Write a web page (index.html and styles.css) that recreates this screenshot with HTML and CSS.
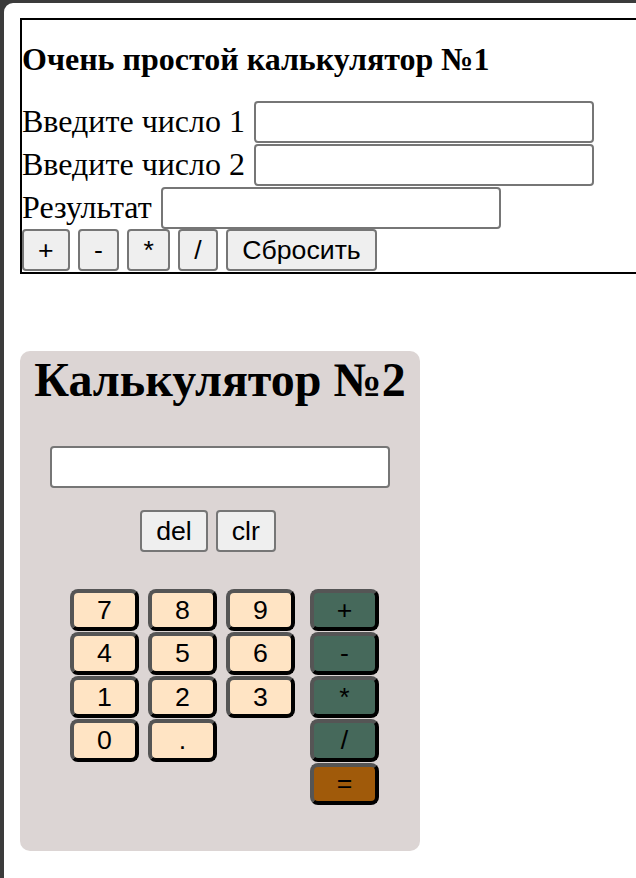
FILE: index.html
```html
<!DOCTYPE html>
<html lang="ru">
<head>
<meta charset="utf-8">
<title>Калькуляторы</title>
<link rel="stylesheet" href="styles.css">
</head>
<body>
<div class="window">
  <section class="calc1">
    <h4 class="calc1-title">Очень простой калькулятор №1</h4>
    <div class="row"><label class="label">Введите число 1</label><input class="field" type="text"></div>
    <div class="row"><label class="label">Введите число 2</label><input class="field" type="text"></div>
    <div class="row"><label class="label">Результат</label><input class="field" type="text"></div>
    <div class="row actions">
      <button class="btn">+</button>
      <button class="btn">-</button>
      <button class="btn">*</button>
      <button class="btn">/</button>
      <button class="btn">Сбросить</button>
    </div>
  </section>

  <section class="calc2">
    <h2 class="calc2-title">Калькулятор №2</h2>
    <input class="display" type="text">
    <div class="edit-row">
      <button class="btn">del</button>
      <button class="btn">clr</button>
    </div>
    <div class="keypad">
      <button class="key digit">7</button>
      <button class="key digit">8</button>
      <button class="key digit">9</button>
      <button class="key op">+</button>
      <button class="key digit">4</button>
      <button class="key digit">5</button>
      <button class="key digit">6</button>
      <button class="key op">-</button>
      <button class="key digit">1</button>
      <button class="key digit">2</button>
      <button class="key digit">3</button>
      <button class="key op">*</button>
      <button class="key digit">0</button>
      <button class="key digit">.</button>
      <button class="key op">/</button>
      <button class="key op eq">=</button>
    </div>
  </section>
</div>
</body>
</html>
```

FILE: styles.css
```css
html {
  background: #3b3b3b;
}

body {
  margin: 0;
  font-family: "Liberation Serif", "Times New Roman", serif;
  font-size: 32px;
  color: #000;
}

.window {
  margin: 3px 0 0 4px;
  height: 875px;
  background: #fff;
  border-top-left-radius: 9px;
  overflow: hidden;
  padding: 15px 0 0 16px;
  box-sizing: border-box;
}

/* ---------- Calculator 1 ---------- */
.calc1 {
  width: 700px;
  border: 2px solid #000;
}

.calc1-title {
  margin: 21px 0 22px 0;
  font-size: 32px;
  font-weight: bold;
  line-height: 37px;
}

.row {
  display: flex;
  align-items: center;
  height: 43px;
}

.label {
  margin-right: 9px;
}

.field {
  box-sizing: border-box;
  width: 340px;
  height: 42px;
  border: 2px solid #767676;
  border-radius: 4px;
  background: #fff;
  padding: 2px 4px;
  font-size: 26px;
}

.actions {
  gap: 8.5px;
  align-items: flex-start;
}

.btn {
  box-sizing: border-box;
  height: 42px;
  padding: 0 14px;
  border: 2px solid #767676;
  border-radius: 4px;
  background: #efefef;
  font-family: "Liberation Sans", Arial, sans-serif;
  font-size: 26.67px;
  color: #000;
  line-height: 1;
}

/* ---------- Calculator 2 ---------- */
.calc2 {
  width: 400px;
  height: 500px;
  margin-top: 77px;
  background: #dcd5d4;
  border-radius: 10px;
  display: flex;
  flex-direction: column;
  align-items: center;
}

.calc2-title {
  margin: 1px 0 0 0;
  font-size: 48px;
  font-weight: bold;
  line-height: 55px;
}

.display {
  box-sizing: border-box;
  width: 340px;
  height: 42px;
  margin-top: 39px;
  border: 2px solid #767676;
  border-radius: 4px;
  background: #fff;
  font-size: 26px;
}

.edit-row {
  display: flex;
  gap: 8px;
  margin-top: 22px;
  padding-right: 24px;
}

.keypad {
  align-self: flex-start;
  margin: 37px 0 0 50px;
  display: grid;
  grid-template-columns: 69px 69px 69px 75px;
  grid-auto-rows: 42.4px;
  column-gap: 9px;
  row-gap: 1px;
}

.key {
  box-sizing: border-box;
  width: 69px;
  height: 42.4px;
  padding: 0;
  border: 4px solid;
  border-color: #555 #000 #000 #555;
  border-radius: 8px;
  font-family: "Liberation Sans", Arial, sans-serif;
  font-size: 26.67px;
  line-height: 1;
  color: #000;
}

.digit {
  background: #ffe4c4;
}

.op {
  grid-column: 4;
  justify-self: end;
  background: #46695b;
}

.eq {
  background: #a05a0a;
}
```
